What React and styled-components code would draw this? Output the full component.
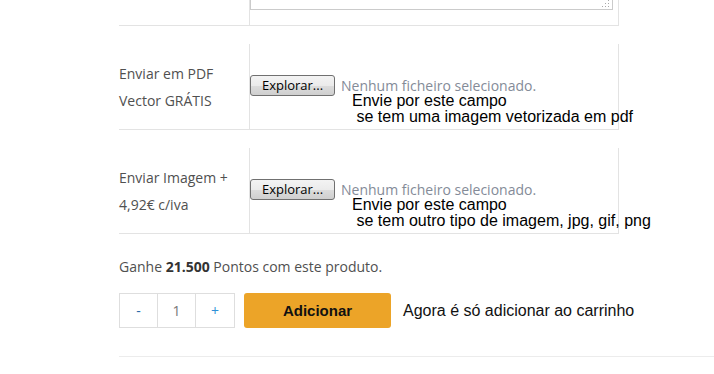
import React from "react";
import styled, { createGlobalStyle } from "styled-components";

const GlobalStyle = createGlobalStyle`
  html, body { margin: 0; padding: 0; background: #ffffff; }
  body { font-family: "Open Sans", "Noto Sans", Arial, sans-serif; overflow: hidden; }
`;

const Page = styled.div`
  padding-left: 119px;
  margin-top: -40px;
`;

const OptionRow = styled.div`
  display: grid;
  grid-template-columns: 130px 370px;
  margin-bottom: ${(p) => p.$gap}px;
`;

const LabelCell = styled.div`
  border-bottom: 1px solid #e3e3e3;
  display: flex;
  align-items: center;
  font-size: 14px;
  line-height: 27px;
  color: #505050;
  height: ${(p) => (p.$height ? `${p.$height}px` : "auto")};
  box-sizing: border-box;
`;

const FieldCell = styled.div`
  border-left: 1px solid #e3e3e3;
  border-right: 1px solid #e3e3e3;
  border-bottom: 1px solid #e3e3e3;
  box-sizing: border-box;
  padding-top: ${(p) => p.$padTop || 0}px;
  padding-bottom: ${(p) => p.$padBottom || 0}px;
  height: ${(p) => (p.$height ? `${p.$height}px` : "auto")};
`;

const AreaWrap = styled.div`
  position: relative;
  width: 363px;
  height: 50px;
`;

const TextArea = styled.textarea`
  display: block;
  width: 363px;
  height: 50px;
  box-sizing: border-box;
  border: 1px solid #cbcbcb;
  resize: none;
  margin: 0;
  padding: 2px;
  outline: none;
`;

const Grip = styled.svg`
  position: absolute;
  right: 3px;
  bottom: 2px;
  width: 8px;
  height: 8px;
`;

const InputLine = styled.div`
  display: flex;
  align-items: center;
  gap: 6px;
  height: 21px;
`;

const BrowseButton = styled.button`
  height: 21px;
  width: 85px;
  box-sizing: border-box;
  border: 1px solid #707070;
  border-radius: 3px;
  background: linear-gradient(#f3f3f3 0%, #ebebeb 50%, #dddddd 51%, #cfcfcf 100%);
  font-family: "Open Sans", "Noto Sans", sans-serif;
  font-size: 13px;
  line-height: 17px;
  color: #000000;
  padding: 0;
  margin: 0;
`;

const NoFile = styled.span`
  font-size: 14px;
  line-height: 16px;
  color: #848b98;
  white-space: nowrap;
`;

const Help = styled.div`
  margin-top: -3px;
  margin-left: 102px;
  font-family: "Liberation Sans", Arial, sans-serif;
  font-size: 16px;
  line-height: 16px;
  color: #000000;
  white-space: pre;
`;

const Points = styled.p`
  margin: 0 0 17px 0;
  font-size: 14px;
  line-height: 19px;
  color: #505050;
  b { color: #333333; font-weight: 700; }
`;

const BuyRow = styled.div`
  display: flex;
  align-items: center;
  height: 35px;
`;

const Qty = styled.div`
  display: flex;
  border: 1px solid #dedede;
  height: 35px;
  box-sizing: border-box;
`;

const QtyCell = styled.div`
  width: 38px;
  box-sizing: border-box;
  border-right: ${(p) => (p.$last ? "none" : "1px solid #dedede")};
  display: flex;
  align-items: center;
  justify-content: center;
  font-size: 14px;
  color: ${(p) => p.$color};
`;

const AddButton = styled.button`
  margin-left: 9px;
  width: 147px;
  height: 35px;
  border: none;
  border-radius: 3px;
  background: #eca428;
  font-family: "Liberation Sans", Arial, sans-serif;
  font-weight: 700;
  font-size: 15px;
  color: #111111;
  padding: 0;
`;

const Hint = styled.span`
  margin-left: 12px;
  font-family: "Liberation Sans", Arial, sans-serif;
  font-size: 16px;
  color: #111111;
`;

const Divider = styled.div`
  margin-top: 28px;
  border-top: 1px solid #ececec;
`;

function UploadField({ help }) {
  return (
    <FieldCell $padTop={31} $height={86}>
      <InputLine>
        <BrowseButton type="button">Explorar...</BrowseButton>
        <NoFile>Nenhum ficheiro selecionado.</NoFile>
      </InputLine>
      <Help>{help}</Help>
    </FieldCell>
  );
}

export default function App() {
  return (
    <>
      <GlobalStyle />
      <Page>
        <OptionRow $gap={18}>
          <LabelCell />
          <FieldCell $padBottom={15}>
            <AreaWrap>
              <TextArea readOnly />
              <Grip viewBox="0 0 8 8">
                <g fill="#a9a9a9">
                  <rect x="6" y="0" width="1" height="1" />
                  <rect x="6" y="3" width="1" height="1" />
                  <rect x="3" y="3" width="1" height="1" />
                  <rect x="6" y="6" width="1" height="1" />
                  <rect x="3" y="6" width="1" height="1" />
                  <rect x="0" y="6" width="1" height="1" />
                </g>
              </Grip>
            </AreaWrap>
          </FieldCell>
        </OptionRow>

        <OptionRow $gap={18}>
          <LabelCell $height={86}>
            <span>
              Enviar em PDF
              <br />
              Vector GRÁTIS
            </span>
          </LabelCell>
          <UploadField help={"Envie por este campo\n se tem uma imagem vetorizada em pdf"} />
        </OptionRow>

        <OptionRow $gap={23}>
          <LabelCell $height={86}>
            <span>
              Enviar Imagem +
              <br />
              4,92€ c/iva
            </span>
          </LabelCell>
          <UploadField help={"Envie por este campo\n se tem outro tipo de imagem, jpg, gif, png"} />
        </OptionRow>

        <Points>
          Ganhe <b>21.500</b> Pontos com este produto.
        </Points>

        <BuyRow>
          <Qty>
            <QtyCell $color="#2b6aa8">-</QtyCell>
            <QtyCell $color="#777777">1</QtyCell>
            <QtyCell $color="#2f8fd6" $last>+</QtyCell>
          </Qty>
          <AddButton type="button">Adicionar</AddButton>
          <Hint>Agora é só adicionar ao carrinho</Hint>
        </BuyRow>

        <Divider />
      </Page>
    </>
  );
}
